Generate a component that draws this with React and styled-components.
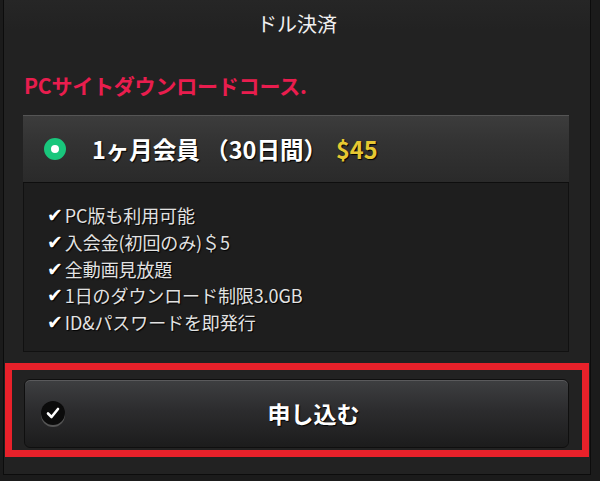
import React from 'react';
import styled, { createGlobalStyle } from 'styled-components';

const GlobalStyle = createGlobalStyle`
  html, body {
    margin: 0;
    padding: 0;
    background: #1b1b1b;
    font-family: "Noto Sans CJK JP", "Liberation Sans", sans-serif;
  }
`;

const Panel = styled.div`
  box-sizing: border-box;
  width: 588px;
  margin-left: 3px;
  background: linear-gradient(#262626, #222 30px, #222);
  border-left: 1px solid #0c0c0c;
  border-right: 1px solid #0c0c0c;
  border-bottom: 1px solid #0c0c0c;
  padding-bottom: 17px;
`;

const Title = styled.div`
  height: 48px;
  line-height: 48px;
  text-align: center;
  color: #f0f0f0;
  font-size: 20px;
`;

const CourseHeading = styled.div`
  margin-top: 22px;
  padding-left: 20px;
  color: #e91d4e;
  font-size: 21px;
  font-weight: 700;
  line-height: 30px;
  letter-spacing: -0.2px;
`;

const Card = styled.div`
  margin: 15px 0 0 19px;
  width: 546px;
`;

const CardHeader = styled.div`
  box-sizing: border-box;
  height: 68px;
  display: flex;
  align-items: center;
  gap: 26px;
  padding-left: 21px;
  background: linear-gradient(#3c3c3c, #333 40%, #2a2a2a);
  border-top: 1px solid #555;
  border-bottom: 1px solid #0e0e0e;
`;

const Radio = styled.span`
  box-sizing: border-box;
  width: 22px;
  height: 22px;
  border-radius: 50%;
  border: 7px solid #19c67c;
  background: #fff;
  flex-shrink: 0;
`;

const PlanName = styled.div`
  color: #fff;
  font-size: 23.5px;
  font-weight: 700;
  text-shadow: 1px 1px 1px #000;
  white-space: pre;
`;

const Price = styled.span`
  color: #e6c832;
  margin-left: 9px;
`;

const CardBody = styled.ul`
  margin: 0;
  list-style: none;
  background: #1e1e1e;
  border: 1px solid #111;
  border-top: none;
  padding: 19px 0 15px 23px;
`;

const Feature = styled.li`
  display: flex;
  align-items: center;
  gap: 2px;
  color: #e2e2e2;
  font-size: 18px;
  line-height: 26.8px;
  letter-spacing: -0.1px;
  text-shadow: 1px 1px 1px #000;
`;

const Tick = styled.span`
  color: #fff;
  font-size: 19px;
  font-weight: 700;
  font-family: "DejaVu Sans", sans-serif;
`;

const Frame = styled.div`
  box-sizing: border-box;
  margin: 11px 0 0 1px;
  width: 584px;
  border: 7px solid #e8212a;
  padding: 9px 13px 2px 12px;
`;

const ApplyButton = styled.button`
  box-sizing: border-box;
  width: 100%;
  height: 69px;
  display: flex;
  align-items: center;
  padding: 0 0 0 16px;
  border: 1px solid #0f0f0f;
  border-radius: 6px;
  background: linear-gradient(#3e3f41, #2c2c2e 45%, #1c1c1c);
  box-shadow: inset 0 1px 0 #5a5a5c;
  cursor: pointer;
  font-family: inherit;
`;

const CheckBadge = styled.span`
  width: 24px;
  height: 24px;
  border-radius: 50%;
  background: #0b0b0b;
  box-shadow: 0 2px 0 #555;
  display: flex;
  align-items: center;
  justify-content: center;
  flex-shrink: 0;
`;

const ButtonLabel = styled.span`
  flex: 1;
  text-align: center;
  color: #fff;
  font-size: 23px;
  font-weight: 700;
  padding-right: 6px;
  text-shadow: 1px 1px 1px #000;
`;

const features = [
  'PC版も利用可能',
  '入会金(初回のみ)＄5',
  '全動画見放題',
  '1日のダウンロード制限3.0GB',
  'ID&パスワードを即発行',
];

export default function App() {
  return (
    <>
      <GlobalStyle />
      <Panel>
        <Title>ドル決済</Title>
        <CourseHeading>PCサイトダウンロードコース.</CourseHeading>
        <Card>
          <CardHeader>
            <Radio />
            <PlanName>
              1ヶ月会員 （30日間）<Price>$45</Price>
            </PlanName>
          </CardHeader>
          <CardBody>
            {features.map(f => (
              <Feature key={f}>
                <Tick>✔</Tick>
                {f}
              </Feature>
            ))}
          </CardBody>
        </Card>
        <Frame>
          <ApplyButton>
            <CheckBadge>
              <svg width="14" height="14" viewBox="0 0 14 14">
                <path d="M2 7.5 L5.5 11 L12 3" fill="none" stroke="#fff" strokeWidth="2.6" strokeLinecap="round" strokeLinejoin="round" />
              </svg>
            </CheckBadge>
            <ButtonLabel>申し込む</ButtonLabel>
          </ApplyButton>
        </Frame>
      </Panel>
    </>
  );
}
